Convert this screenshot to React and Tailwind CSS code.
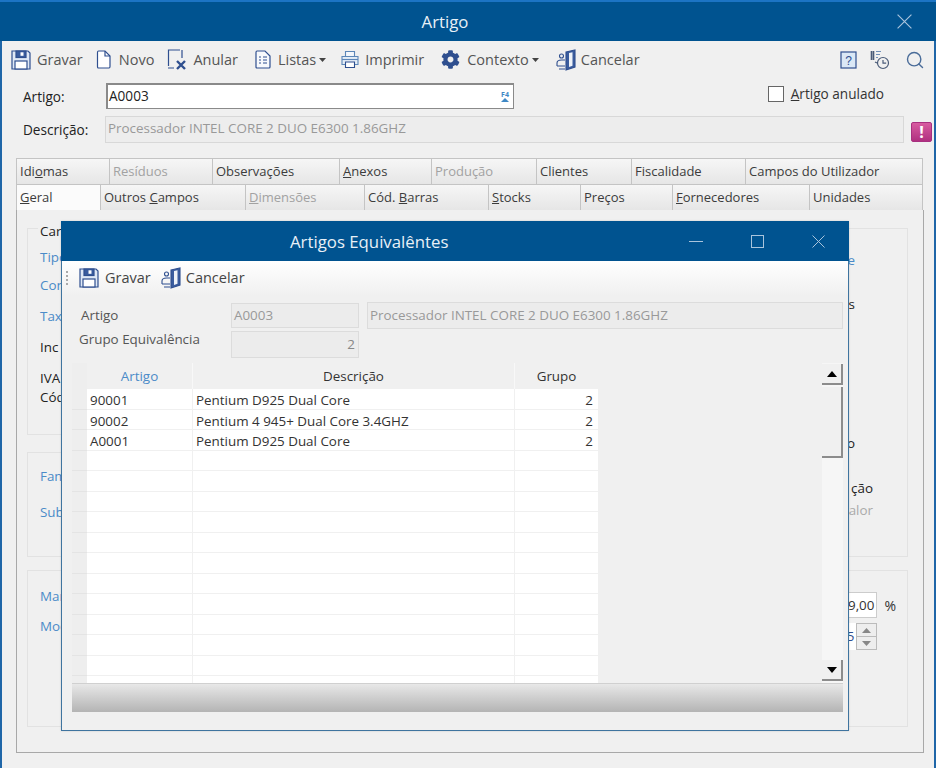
import React from "react";
import { FaCog } from "react-icons/fa";
import { Search } from "lucide-react";

const NAVY = "#2f4f8f";

const Floppy = ({ s = 20 }) => (
  <svg width={s} height={s} viewBox="0 0 20 20" fill="none" stroke={NAVY} strokeWidth="1.2" className="shrink-0">
    <path d="M1 1h16l2 2v16H1z" fill="#dfe8f5" />
    <rect x="5" y="1" width="10" height="6.5" fill="#3a5c9e" />
    <rect x="9.5" y="2.3" width="3" height="3.5" fill="#fff" stroke="none" />
    <rect x="4" y="11" width="12" height="8" fill="#fff" />
  </svg>
);
const Doc = () => (
  <svg width="15" height="19" viewBox="0 0 15 19" fill="#fff" stroke={NAVY} strokeWidth="1.2" className="shrink-0">
    <path d="M1.5 2.5q0-1.500 1-1.500h6.500l5 5v10.500q0 1.500-1 1.500h-10.500q-1 0-1-1.500z" />
    <path d="M9 1v5h5" fill="none" />
  </svg>
);
const Cancel = () => (
  <svg width="21" height="22" viewBox="0 0 21 22" fill="none" stroke={NAVY} strokeWidth="1.2" className="shrink-0">
    <path d="M13 1H1.500v16M1 19h6M15 1v8" />
    <path d="M10 12l8 8M18 12l-8 8" strokeWidth="2.400" />
  </svg>
);
const ListDoc = () => (
  <svg width="16" height="19" viewBox="0 0 16 19" fill="#f7f9fc" stroke={NAVY} strokeWidth="1.2" className="shrink-0">
    <path d="M1 2.500q0-1.500 1-1.500h8l5 5v11q0 1-1 1H2q-1 0-1-1z" />
    <path d="M4 7h2M8 7h4M4 10h2M8 10h4M4 13h2M8 13h4" strokeWidth="1" />
  </svg>
);
const Printer = () => (
  <svg width="18" height="19" viewBox="0 0 18 19" fill="#f4f7fb" stroke="#5d87b8" strokeWidth="1.1" className="shrink-0">
    <path d="M4.500 6V1.500h9V6" />
    <path d="M1 6.500h16v8H1z" fill="#e4edf6" />
    <path d="M1 9.500h16" />
    <path d="M4.500 12h9v5.500h-9z" fill="#fff" stroke={NAVY} />
  </svg>
);
const DoorIcon = () => (
  <svg width="20" height="22" viewBox="0 0 20 22" fill="none" stroke={NAVY} strokeWidth="1.1" className="shrink-0">
    <path d="M10 3L19 1v17l-9 3z" fill="#3a5c9e" />
    <path d="M13 4l3.500-.700v13.500L13 18z" fill="#eef2f8" stroke="none" />
    <circle cx="5.500" cy="7" r="2" />
    <path d="M1 17v-3c0-2 1.500-3 4.500-3H9M1 17h8M3 20h6" />
  </svg>
);
const Caret = () => (
  <svg width="7" height="4" viewBox="0 0 7 4" className="ml-[3px]"><path d="M0 0h7L3.500 4z" fill="#444" /></svg>
);
const HelpIcon = () => (
  <svg width="17" height="18" viewBox="0 0 17 18" fill="none" className="shrink-0">
    <rect x="1" y="1" width="15" height="16" stroke={NAVY} strokeWidth="1.2" fill="#dbe8f6" />
    <text x="8.500" y="13.500" textAnchor="middle" fontSize="12" fill={NAVY} fontFamily="Liberation Sans">?</text>
  </svg>
);
const HistoryIcon = () => (
  <svg width="20" height="20" viewBox="0 0 20 20" fill="none" stroke="#4a5b78" strokeWidth="1.2" className="shrink-0">
    <path d="M1.500 1v9M3.500 1v9" strokeWidth="1.600" />
    <path d="M6 1.500h5M6 4.500h4M6 7.500h2" strokeWidth="1.100" stroke="#6f8fb8" />
    <circle cx="13" cy="13" r="5.500" fill="#f0f0f0" />
    <path d="M13 10v3.200h3.200M7 13l-2-1" />
  </svg>
);
const X = ({ c = "#a9c4dc", s = 13 }) => (
  <svg width={s} height={s} viewBox="0 0 13 13" stroke={c} strokeWidth="1"><path d="M.5.5l12 12M12.500.5l-12 12" /></svg>
);

const Tool = ({ icon, label, caret, gap, className = "" }) => (
  <div className={`flex items-center ${className}`}>
    {icon}
    <span style={{ marginLeft: gap }} className="flex items-center whitespace-nowrap">{label}{caret && <Caret />}</span>
  </div>
);

const row1 = [
  [93, <span>Idi<u>o</u>mas</span>],
  [103, "Resíduos", 1],
  [127, "Observações"],
  [92, <span><u>A</u>nexos</span>],
  [105, "Produção", 1],
  [95, "Clientes"],
  [114, "Fiscalidade"],
  [177, "Campos do Utilizador"],
];
const row2 = [
  [84, <span><u>G</u>eral</span>, 0, 1],
  [145, <span>Outros <u>C</u>ampos</span>],
  [119, <span><u>D</u>imensões</span>, 1],
  [124, <span>Cód. <u>B</u>arras</span>],
  [92, <span><u>S</u>tocks</span>],
  [92, "Preços"],
  [137, <span><u>F</u>ornecedores</span>],
  [113, "Unidades"],
];

const Tab = ({ w, label, disabled, active }) => (
  <div
    style={{ width: w }}
    className={`h-[26px] flex items-center pl-[3px] border-r border-t border-[#c4c4c4] text-[13px] leading-none ${
      active ? "bg-[#fbfbfb]" : "bg-gradient-to-b from-[#f6f6f6] to-[#e6e6e6]"
    } ${disabled ? "text-[#a2a2a2]" : "text-[#3c3c3c]"}`}
  >
    {label}
  </div>
);

const Group = ({ className = "", children }) => (
  <div className={`border border-[#e2e2e2] ${className}`}>{children}</div>
);

const rows = [
  ["90001", "Pentium D925 Dual Core", "2"],
  ["90002", "Pentium 4 945+ Dual Core 3.4GHZ", "2"],
  ["A0001", "Pentium D925 Dual Core", "2"],
  ...Array.from({ length: 12 }, () => ["", "", ""]),
];

const Dialog = () => (
  <div className="absolute left-[61px] top-[221px] w-[788px] h-[510px] border border-[#3f749f] bg-[#f0f0f0] flex flex-col shadow-[0_0_2px_rgba(0,0,0,0.15)]">
    <div className="h-[40px] -mt-px -mx-px bg-[#005390] shrink-0 relative flex items-center text-[#e8f0f7]">
      <div className="pl-[229px] pt-[2px] text-[16.8px] whitespace-nowrap">Artigos Equivalêntes</div>
      <div className="flex-1 flex items-center justify-end pr-[24px]">
        <div className="w-[14px] h-px bg-[#a9c4dc] mr-[48px]" />
        <div className="w-[13px] h-[13px] border border-[#a9c4dc] mr-[48px]" />
        <X />
      </div>
    </div>
    <div className="h-[35px] shrink-0 bg-gradient-to-b from-white to-[#f0f0f0] flex items-center pl-[4px] pb-[2px] text-[14.5px] text-[#444]">
      <div className="flex flex-col gap-[2px] mr-[11px]">
        <i className="block w-[2px] h-[2px] bg-[#aaa]" /><i className="block w-[2px] h-[2px] bg-[#aaa]" /><i className="block w-[2px] h-[2px] bg-[#aaa]" /><i className="block w-[2px] h-[2px] bg-[#aaa]" />
      </div>
      <Tool icon={<Floppy />} label="Gravar" gap={6} />
      <Tool icon={<DoorIcon />} label="Cancelar" gap={5} className="ml-[10px]" />
    </div>
    <div className="pl-[10px] pr-[5px] text-[13.4px] text-[#555]">
      <div className="flex items-center h-[27px] mt-[6px]">
        <span className="w-[159px] pl-[9px]">Artigo</span>
        <div className="w-[128px] h-[25px] bg-[#ececec] border border-[#dcdcdc] text-[#999] pl-[2px] flex items-center">A0003</div>
        <div className="ml-[8px] flex-1 h-[27px] bg-[#ececec] border border-[#dcdcdc] text-[#999] pl-[2px] flex items-center whitespace-nowrap">Processador INTEL CORE 2 DUO E6300 1.86GHZ</div>
      </div>
      <div className="flex h-[27px] mt-[2px]">
        <span className="w-[159px] pl-[7px] leading-[16px]">Grupo Equivalência</span>
        <div className="w-[128px] h-[27px] bg-[#ececec] border border-[#dcdcdc] text-[#888] pr-[3px] flex items-center justify-end">2</div>
      </div>
    </div>
    <div className="mt-[5px] ml-[10px] mr-[5px] h-[320px] flex overflow-hidden shrink-0">
      <div className="w-[15px] shrink-0 pt-[26px] bg-[#eeeeee]">
        {rows.map((_, i) => (
          <div key={i} className="h-[20.5px] border-b border-[#e4e4e4]" />
        ))}
      </div>
      <div className="w-[511px] shrink-0">
        <div className="grid grid-cols-[106px_322px_83px] h-[26px] text-[13.4px] text-[#333] text-center leading-[26px]">
          <div className="text-[#4b8bc8] border-r border-[#f8f8f8]">Artigo</div>
          <div className="border-r border-[#f8f8f8]">Descrição</div>
          <div>Grupo</div>
        </div>
        {rows.map((r, i) => (
          <div key={i} className="grid grid-cols-[106px_322px_83px] h-[20.5px] bg-white border-b border-[#f0f0f0] text-[13.4px] leading-[22px] text-[#333]">
            <div className="pl-[3px] border-r border-[#f0f0f0]">{r[0]}</div>
            <div className="pl-[3px] border-r border-[#f0f0f0] whitespace-nowrap">{r[1]}</div>
            <div className="pr-[5px] text-right">{r[2]}</div>
          </div>
        ))}
      </div>
      <div className="flex-1" />
      <div className="w-[21px] shrink-0 bg-[#f6f6f6] flex flex-col pt-[1px]">
        <div className="h-[21px] bg-[#f0f0f0] border-r-2 border-b-2 border-[#8c8c8c] flex items-center justify-center">
          <svg width="10" height="6" viewBox="0 0 10 6"><path d="M5 0l5 6H0z" fill="#000" /></svg>
        </div>
        <div className="mt-[2px] h-[71px] bg-[#f0f0f0] border-r-2 border-b-2 border-[#8c8c8c]" />
        <div className="flex-1" />
        <div className="h-[21px] mb-[2px] bg-[#f0f0f0] border-r-2 border-b-2 border-[#8c8c8c] flex items-center justify-center">
          <svg width="10" height="6" viewBox="0 0 10 6"><path d="M5 6l5-6H0z" fill="#000" /></svg>
        </div>
      </div>
    </div>
    <div className="ml-[10px] mr-[5px] h-[29px] border-t border-[#d0d0d0] bg-gradient-to-b from-[#e8e8e8] to-[#b4b4b4]" />
  </div>
);

export default function App() {
  return (
    <div
      className="relative w-[936px] h-[768px] overflow-hidden bg-[#f0f0f0] flex flex-col text-[#333]"
      style={{ fontFamily: '"Open Sans", "Noto Sans", sans-serif' }}
    >
      {/* Title bar */}
      <div className="h-[41px] shrink-0 bg-[#005390] border-t-2 border-[#1c74c4] flex items-center justify-center pr-[46px] relative text-[16.8px] text-[#e8f0f7]">
        Artigo
        <div className="absolute right-[24px] top-[12px]"><X s={15} /></div>
      </div>
      <div className="flex-1 border-l-2 border-r-2 border-[#1f66a8] flex flex-col min-h-0">
        {/* Toolbar */}
        <div className="h-[37px] shrink-0 flex items-center pl-[9px] pr-[9px] text-[14.5px] text-[#555]">
          <Tool icon={<Floppy />} label="Gravar" gap={6} />
          <Tool icon={<Doc />} label="Novo" gap={8} className="ml-[13px]" />
          <Tool icon={<Cancel />} label="Anular" gap={5} className="ml-[13px]" />
          <Tool icon={<ListDoc />} label="Listas" caret gap={7} className="ml-[17px]" />
          <Tool icon={<Printer />} label="Imprimir" gap={6} className="ml-[15px]" />
          <Tool icon={<FaCog size={19} color={NAVY} className="shrink-0" />} label="Contexto" caret gap={7} className="ml-[17px]" />
          <Tool icon={<DoorIcon />} label="Cancelar" gap={5} className="ml-[17px]" />
          <div className="flex-1" />
          <div className="flex items-center">
            <HelpIcon />
            <div className="ml-[13px]"><HistoryIcon /></div>
            <div className="ml-[15px]"><Search size={20} color="#4a6c99" strokeWidth={1.7} /></div>
          </div>
        </div>
        {/* Artigo row */}
        <div className="flex items-start h-[33px] mt-[5px] text-[13.6px]">
          <span className="w-[104px] pl-[21px] leading-[28px] text-[#222]">Artigo:</span>
          <div className="w-[408px] h-[26px] bg-white border border-[#8a8a8a] border-l-2 border-t-2 flex items-center justify-between pl-[1px] pr-[4px] text-[#222]">
            A0003
            <span className="flex flex-col items-center">
              <span className="text-[7px] leading-[7px] text-[#3f88c5] font-bold">F4</span>
              <svg width="8" height="4" viewBox="0 0 8 4"><path d="M4 0l4 4H0z" fill="#3f88c5" /></svg>
            </span>
          </div>
          <div className="flex-1" />
          <div className="flex items-center mr-[50px] mt-[1px] text-[#333]">
            <div className="w-[16px] h-[16px] bg-white border border-[#666] mr-[7px]" />
            <span><u>A</u>rtigo anulado</span>
          </div>
        </div>
        {/* Descricao row */}
        <div className="flex items-center h-[27px] text-[13.6px]">
          <span className="w-[103px] pl-[21px] pt-[1px] text-[#222]">Descrição:</span>
          <div className="w-[799px] h-[27px] bg-[#ededed] border border-[#d8d8d8] pl-[2px] text-[13.4px] text-[#999] flex items-center pb-[2px] whitespace-nowrap">Processador INTEL CORE 2 DUO E6300 1.86GHZ</div>
          <div className="ml-[7px] w-[21px] h-[20px] mt-[4px] rounded-[2px] bg-gradient-to-b from-[#d85ba0] to-[#b03080] border border-[#a83080] flex items-center justify-center text-white font-bold text-[16px] leading-none">!</div>
        </div>
        {/* Tabs */}
        <div className="mt-[15px] ml-[14px] mr-[10px] flex flex-col flex-1 min-h-0 mb-[15px]">
          <div className="flex border-l border-[#c4c4c4]">
            {row1.map(([w, l, d], i) => <Tab key={i} w={w} label={l} disabled={d} />)}
          </div>
          <div className="flex border-l border-[#c4c4c4]">
            {row2.map(([w, l, d, a], i) => <Tab key={i} w={w} label={l} disabled={d} active={a} />)}
          </div>
          <div className="flex-1 border border-t-0 border-[#a8a8a8] pl-[10px] pr-[15px] pt-[18px] pb-[25px] flex flex-col">
            <div className="flex gap-[20px] h-[329px] shrink-0">
              <div className="flex-1 flex flex-col gap-[17px]">
                <Group className="h-[207px] pl-[12px] relative">
                  <div className="absolute -top-[8px] left-[10px] px-[2px] bg-[#f0f0f0] text-[13.4px] text-[#222]">Car</div>
                  <div className="flex flex-col text-[13.4px] pt-[18px]">
                    <span className="text-[#4b8bc8] h-[28px]">Tipo</span>
                    <span className="text-[#4b8bc8] h-[31px]">Con</span>
                    <span className="text-[#4b8bc8] h-[31px]">Tax</span>
                    <span className="text-[#222] h-[31px]">Inc</span>
                    <span className="text-[#222] h-[19px]">IVA</span>
                    <span className="text-[#222]">Cód</span>
                  </div>
                </Group>
                <Group className="h-[105px] pl-[12px] pt-[13px] text-[13.4px] text-[#4b8bc8] flex flex-col gap-[16px]">
                  <span>Fam</span>
                  <span>Sub</span>
                </Group>
              </div>
              <Group className="w-[200px] text-[13.4px] text-right pr-[52px] flex flex-col pt-[21px]">
                <span className="text-[#4b8bc8] h-[44px]">e</span>
                <span className="text-[#222] h-[139px]">s</span>
                <span className="text-[#222] h-[45px]">o</span>
                <span className="text-[#222] h-[22px] mr-[-18px]">ção</span>
                <span className="text-[#aaa] mr-[-18px]">valor</span>
              </Group>
            </div>
            <Group className="mt-[13px] flex-1 flex justify-between">
              <div className="pl-[12px] pt-[15px] flex flex-col gap-[10px] text-[13.4px] text-[#4b8bc8]">
                <span>Mar</span>
                <span>Mod</span>
              </div>
              <div className="pt-[21px] pr-[11px] flex flex-col text-[13.4px]">
                <div className="flex items-center gap-[7px]">
                  <div className="w-[50px] h-[26px] bg-white border border-[#ccc] flex items-center justify-end pr-[2px]">9,00</div>
                  <span className="text-[14px]">%</span>
                </div>
                <div className="flex mt-[5px] h-[27px] w-[50px]">
                  <div className="flex-1 bg-white text-[#2f4f8f] text-right leading-[26px] pr-[2px]">5</div>
                  <div className="w-[21px] flex flex-col border border-[#bbb]">
                    <div className="flex-1 bg-[#eee] border-b border-[#bbb] flex items-center justify-center"><svg width="9" height="5"><path d="M4.500 0L9 5H0z" fill="#888" /></svg></div>
                    <div className="flex-1 bg-[#eee] flex items-center justify-center"><svg width="9" height="5"><path d="M4.500 5L9 0H0z" fill="#888" /></svg></div>
                  </div>
                </div>
              </div>
            </Group>
          </div>
        </div>
      </div>
      <Dialog />
    </div>
  );
}
